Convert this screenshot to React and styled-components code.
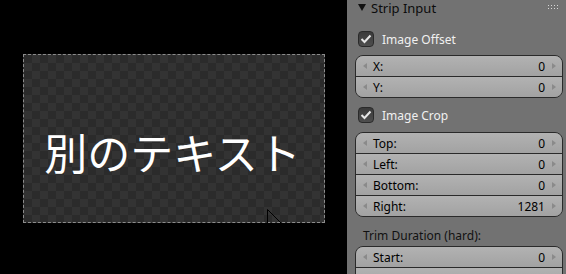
import React from "react"
import styled, { createGlobalStyle } from "styled-components"

const GlobalStyle = createGlobalStyle`
  html, body {
    margin: 0;
    padding: 0;
    background: #000;
  }
  body {
    font-family: "Noto Sans", "DejaVu Sans", sans-serif;
    font-size: 12px;
  }
`;

const Screen = styled.div`
  display: flex;
  width: 566px;
  height: 274px;
  overflow: hidden;
`;

const Viewport = styled.div`
  flex: 0 0 347px;
  background: #000;
  padding: 54px 0 0 23px;
  box-sizing: border-box;
`;

const Canvas = styled.div`
  position: relative;
  width: 302px;
  height: 169px;
  box-sizing: border-box;
  border: 1px dashed #8c8c8c;
  background-color: #2b2b2b;
  background-image:
    linear-gradient(45deg, #333 25%, transparent 25%, transparent 75%, #333 75%),
    linear-gradient(45deg, #333 25%, transparent 25%, transparent 75%, #333 75%);
  background-size: 16px 16px;
  background-position: 0 0, 8px 8px;
  display: flex;
  justify-content: center;
  padding-top: 75px;
`;

const CanvasText = styled.div`
  font-family: "Noto Sans CJK JP", "Noto Sans", sans-serif;
  font-size: 43px;
  line-height: 43px;
  color: #fff;
  letter-spacing: 0px;
  margin-right: 3px;
`;

const Cursor = styled.svg`
  position: absolute;
  left: 243px;
  top: 154px;
`;

const Panel = styled.div`
  flex: 0 0 219px;
  background: #727272;
  padding: 0 3px 0 8px;
  box-sizing: border-box;
  display: flex;
  flex-direction: column;
  & > * {
    flex-shrink: 0;
  }
`;

const Header = styled.div`
  display: flex;
  align-items: center;
  height: 15px;
  color: #0c0c0c;
  font-size: 13px;
`;

const Triangle = styled.span`
  width: 0;
  height: 0;
  border-left: 4px solid transparent;
  border-right: 4px solid transparent;
  border-top: 7px solid #111;
  margin: 0 5px 0 3px;
`;

const Grip = styled.svg`
  margin-left: auto;
  margin-right: 5px;
`;

const CheckRow = styled.label`
  display: flex;
  align-items: center;
  height: 20px;
  margin-top: ${p => p.$top}px;
  color: #f0f0f0;
  font-size: 12px;
  gap: 8px;
  padding-left: 3px;
`;

const Box = styled.span`
  width: 16px;
  height: 16px;
  box-sizing: border-box;
  border-radius: 4px;
  border: 1px solid #2a2a2a;
  background: linear-gradient(#3a3a3a, #4e4e4e);
  display: flex;
  align-items: center;
  justify-content: center;
`;

const Group = styled.div`
  margin-top: ${p => p.$top}px;
  border: 1px solid #2a2a2a;
  border-radius: 8px;
  overflow: hidden;
  display: flex;
  flex-direction: column;
`;

const Row = styled.div`
  display: flex;
  align-items: center;
  flex-shrink: 0;
  height: 20px;
  background: linear-gradient(#b2b2b2, #a2a2a2);
  color: #000;
  font-size: 12px;
  padding: 0 6px 0 7px;
  & + & {
    border-top: 1px solid #2a2a2a;
  }
`;

const Arrow = styled.span`
  width: 0;
  height: 0;
  border-top: 3.5px solid transparent;
  border-bottom: 3.5px solid transparent;
  ${p => (p.$dir === "left"
    ? "border-right: 4px solid #8a8a8a; margin-right: 6px;"
    : "border-left: 4px solid #8a8a8a; margin-left: 7px;")}
`;

const Label = styled.span`
  flex: 1;
`;

const SubTitle = styled.div`
  margin-top: 10px;
  padding-left: 8px;
  height: 16px;
  color: #111;
  font-size: 12px;
`;

function Field({ label, value }) {
  return (
    <Row>
      <Arrow $dir="left" />
      <Label>{label}</Label>
      <span>{value}</span>
      <Arrow $dir="right" />
    </Row>
  )
}

function Check({ label, top }) {
  return (
    <CheckRow $top={top}>
      <Box>
        <svg width="12" height="10" viewBox="0 0 12 10">
          <path d="M1.5 5 L4.5 8 L10.5 1.5" fill="none" stroke="#e6e6e6" strokeWidth="2" />
        </svg>
      </Box>
      {label}
    </CheckRow>
  )
}

export default function App() {
  return (
    <Screen>
      <GlobalStyle />
      <Viewport>
        <Canvas>
          <CanvasText>別のテキスト</CanvasText>
          <Cursor width="16" height="16" viewBox="0 0 16 16">
            <path d="M0.5 0.5 L0.5 15 M0.5 0.5 L14 14" stroke="#000" strokeWidth="1" fill="none" />
          </Cursor>
        </Canvas>
      </Viewport>
      <Panel>
        <Header>
          <Triangle />
          Strip Input
          <Grip width="10" height="6" viewBox="0 0 10 6">
            {[0, 3, 6, 9].map(x => (
              <g key={x}>
                <rect x={x} y="0" width="1" height="1" fill="#d8d8d8" />
                <rect x={x} y="3" width="1" height="1" fill="#d8d8d8" />
              </g>
            ))}
          </Grip>
        </Header>
        <Check label="Image Offset" top={14} />
        <Group $top={6}>
          <Field label="X:" value="0" />
          <Field label="Y:" value="0" />
        </Group>
        <Check label="Image Crop" top={7} />
        <Group $top={7}>
          <Field label="Top:" value="0" />
          <Field label="Left:" value="0" />
          <Field label="Bottom:" value="0" />
          <Field label="Right:" value="1281" />
        </Group>
        <SubTitle>Trim Duration (hard):</SubTitle>
        <Group $top={3}>
          <Field label="Start:" value="0" />
          <Row />
        </Group>
      </Panel>
    </Screen>
  )
}
